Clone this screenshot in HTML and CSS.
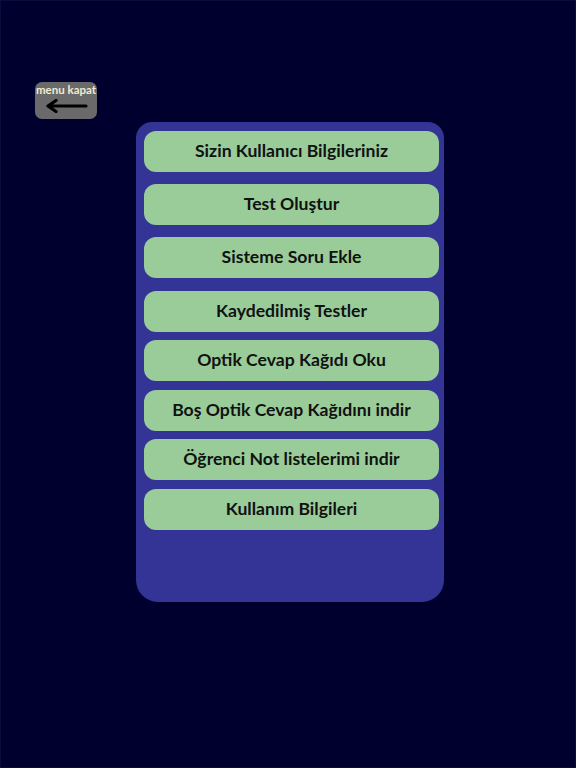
FILE: index.html
```html
<!DOCTYPE html>
<html lang="tr">
<head>
<meta charset="utf-8">
<title>Menü</title>
<link rel="stylesheet" href="styles.css">
</head>
<body>
<div class="screen">
  <button class="close-btn" type="button">
    <span class="close-label">menu kapat</span>
    <svg class="close-arrow" width="44" height="14" viewBox="0 0 44 14">
      <path d="M41 7 H4 M11 1.5 L3 7 L11 12.5" fill="none" stroke="#000" stroke-width="3.2" stroke-linecap="round" stroke-linejoin="round"/>
    </svg>
  </button>
  <nav class="panel">
    <a class="item">Sizin Kullanıcı Bilgileriniz</a>
    <a class="item">Test Oluştur</a>
    <a class="item">Sisteme Soru Ekle</a>
    <a class="item">Kaydedilmiş Testler</a>
    <a class="item">Optik Cevap Kağıdı Oku</a>
    <a class="item">Boş Optik Cevap Kağıdını indir</a>
    <a class="item">Öğrenci Not listelerimi indir</a>
    <a class="item">Kullanım Bilgileri</a>
  </nav>
</div>
</body>
</html>
```
FILE: styles.css
```css
html, body {
  margin: 0;
  padding: 0;
  background: #00002e;
}
.screen {
  box-sizing: border-box;
  width: 576px;
  height: 768px;
  padding-top: 81px;
  border: 1px solid #0c0c3c;
  font-family: Lato, "Open Sans", sans-serif;
}
.close-btn {
  display: flex;
  flex-direction: column;
  align-items: center;
  box-sizing: border-box;
  width: 62px;
  height: 37px;
  margin-left: 34px;
  padding: 2px 0 0;
  border: none;
  border-radius: 7px;
  background: #6a6a6a;
  font-family: Lato, sans-serif;
  cursor: pointer;
}
.close-label {
  font-size: 11.5px;
  font-weight: 700;
  color: #f0ecd0;
  line-height: 12px;
  white-space: nowrap;
}
.close-arrow {
  margin-top: 3px;
  margin-left: 2px;
}
.panel {
  display: flex;
  flex-direction: column;
  box-sizing: border-box;
  width: 308px;
  height: 480px;
  margin: 3px 0 0 135px;
  padding: 9px 5px 0 8px;
  background: #343496;
  border-radius: 16px 16px 22px 22px;
}
.item {
  display: flex;
  align-items: center;
  justify-content: center;
  box-sizing: border-box;
  height: 41px;
  margin-top: 8px;
  padding-bottom: 3px;
  border-radius: 12px;
  background: #99cc99;
  color: #111;
  font-size: 17.6px;
  font-weight: 700;
}
.item:nth-child(1) { margin-top: 0; }
.item:nth-child(2),
.item:nth-child(3) { margin-top: 12px; }
.item:nth-child(4) { margin-top: 13px; }
.item:nth-child(6),
.item:nth-child(8) { margin-top: 9px; }
```
